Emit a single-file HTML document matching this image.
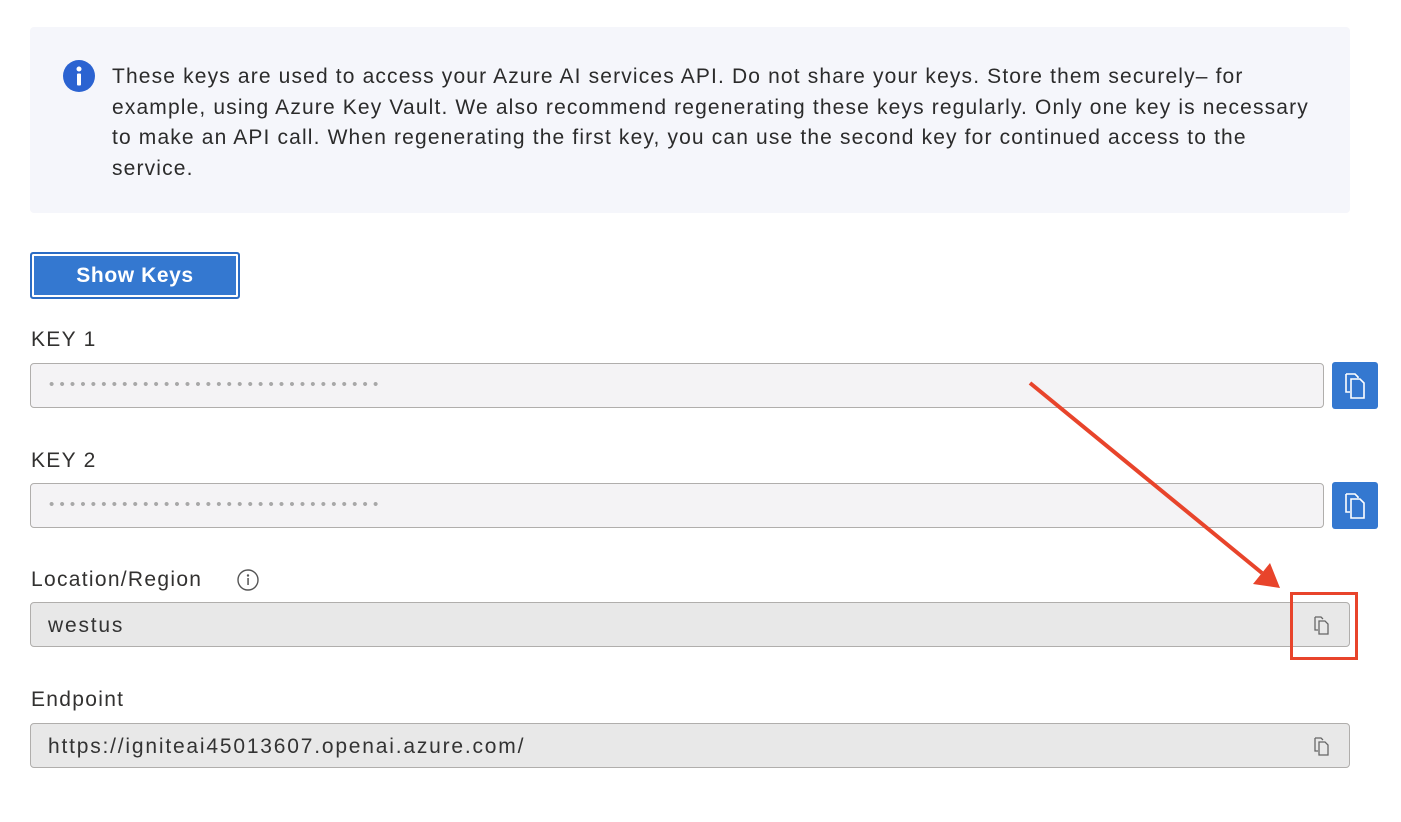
<!DOCTYPE html>
<html><head><style>
body{margin:0;width:1401px;height:822px;background:#fff;font-family:"Liberation Sans",sans-serif;color:#323130;position:relative;overflow:hidden}
.a{position:absolute}
.info{left:30px;top:27px;width:1320px;height:186px;background:#f5f6fb;border-radius:4px}
.txt{left:112px;top:62px;font-size:21px;line-height:30.5px;color:#2b2b2b;white-space:nowrap;letter-spacing:1.15px}
.btn{left:30px;top:252px;width:206px;height:43px;background:#3478d0;border:2px solid #2b6cc4;border-radius:3px;box-shadow:inset 0 0 0 2px #fff,inset 0 0 0 4px #3478d0}
.btn span{position:absolute;left:0;right:0;top:10px;text-align:center;color:#fff;font-weight:bold;font-size:21px;letter-spacing:0.6px}
.lbl{font-size:21px;color:#323130;letter-spacing:1.3px}
.inp{height:45px;border:1.5px solid #b0aeac;border-radius:4px;box-sizing:border-box}
.pw{background:#f4f3f5}
.ro{background:#e8e8e8}
.dots{left:18px;top:12px;font-size:15px;letter-spacing:5.2px;color:#a8a8a8}
.val{left:17px;top:11px;font-size:21px;color:#333;letter-spacing:1.8px}
.cb{width:46px;height:47px;background:#3478d0;border-radius:3px}
</style></head><body>
<div class="a info"></div>
<svg class="a" style="left:63px;top:60px" width="32" height="32"><circle cx="16" cy="16" r="16" fill="#2b63d1"/><circle cx="16" cy="9" r="2.5" fill="#fff"/><rect x="14" y="13.5" width="4" height="12" rx="1" fill="#fff"/></svg>
<div class="a txt">These keys are used to access your Azure AI services API. Do not share your keys. Store them securely– for<br>example, using Azure Key Vault. We also recommend regenerating these keys regularly. Only one key is necessary<br>to make an API call. When regenerating the first key, you can use the second key for continued access to the<br>service.</div>
<div class="a btn"><span>Show Keys</span></div>
<div class="a lbl" style="left:31px;top:328px">KEY 1</div>
<div class="a inp pw" style="left:30px;top:363px;width:1294px"><div class="a dots">••••••••••••••••••••••••••••••••</div></div>
<div class="a cb" style="left:1332px;top:362px"><svg width="46" height="47"><path d="M14 12h9l3 3v1M14 12v18h4" fill="none" stroke="#fff" stroke-width="1.6"/><path d="M19 17h9l4 4v15H19z" fill="#3478d0" stroke="#fff" stroke-width="1.6"/></svg></div>
<div class="a lbl" style="left:31px;top:449px">KEY 2</div>
<div class="a inp pw" style="left:30px;top:483px;width:1294px"><div class="a dots">••••••••••••••••••••••••••••••••</div></div>
<div class="a cb" style="left:1332px;top:482px"><svg width="46" height="47"><path d="M14 12h9l3 3v1M14 12v18h4" fill="none" stroke="#fff" stroke-width="1.6"/><path d="M19 17h9l4 4v15H19z" fill="#3478d0" stroke="#fff" stroke-width="1.6"/></svg></div>
<div class="a lbl" style="left:31px;top:568px">Location/Region</div>
<svg class="a" style="left:236px;top:568px" width="24" height="24"><circle cx="12" cy="12" r="10" fill="none" stroke="#555" stroke-width="1.4"/><circle cx="12" cy="7.5" r="1.2" fill="#555"/><rect x="11.3" y="10" width="1.5" height="7" fill="#555"/></svg>
<div class="a inp ro" style="left:30px;top:602px;width:1320px"><div class="a val">westus</div>
<svg class="a" style="left:1280px;top:11px" width="24" height="24"><path d="M4 3h6l2 2M4 3v13h3" fill="none" stroke="#666" stroke-width="1.3"/><path d="M8 7h6l3 3v10H8z" fill="#e8e8e8" stroke="#666" stroke-width="1.3"/></svg></div>
<div class="a" style="left:1290px;top:592px;width:62px;height:62px;border:3px solid #e8442b"></div>
<div class="a lbl" style="left:31px;top:688px">Endpoint</div>
<div class="a inp ro" style="left:30px;top:723px;width:1320px"><div class="a val">https://igniteai45013607.openai.azure.com/</div>
<svg class="a" style="left:1280px;top:11px" width="24" height="24"><path d="M4 3h6l2 2M4 3v13h3" fill="none" stroke="#666" stroke-width="1.3"/><path d="M8 7h6l3 3v10H8z" fill="#e8e8e8" stroke="#666" stroke-width="1.3"/></svg></div>
<svg class="a" style="left:0;top:0" width="1401" height="822"><line x1="1030" y1="383" x2="1262" y2="573" stroke="#e8442b" stroke-width="4"/><polygon points="1280,588 1253,584 1270,563" fill="#e8442b"/></svg>
</body></html>
